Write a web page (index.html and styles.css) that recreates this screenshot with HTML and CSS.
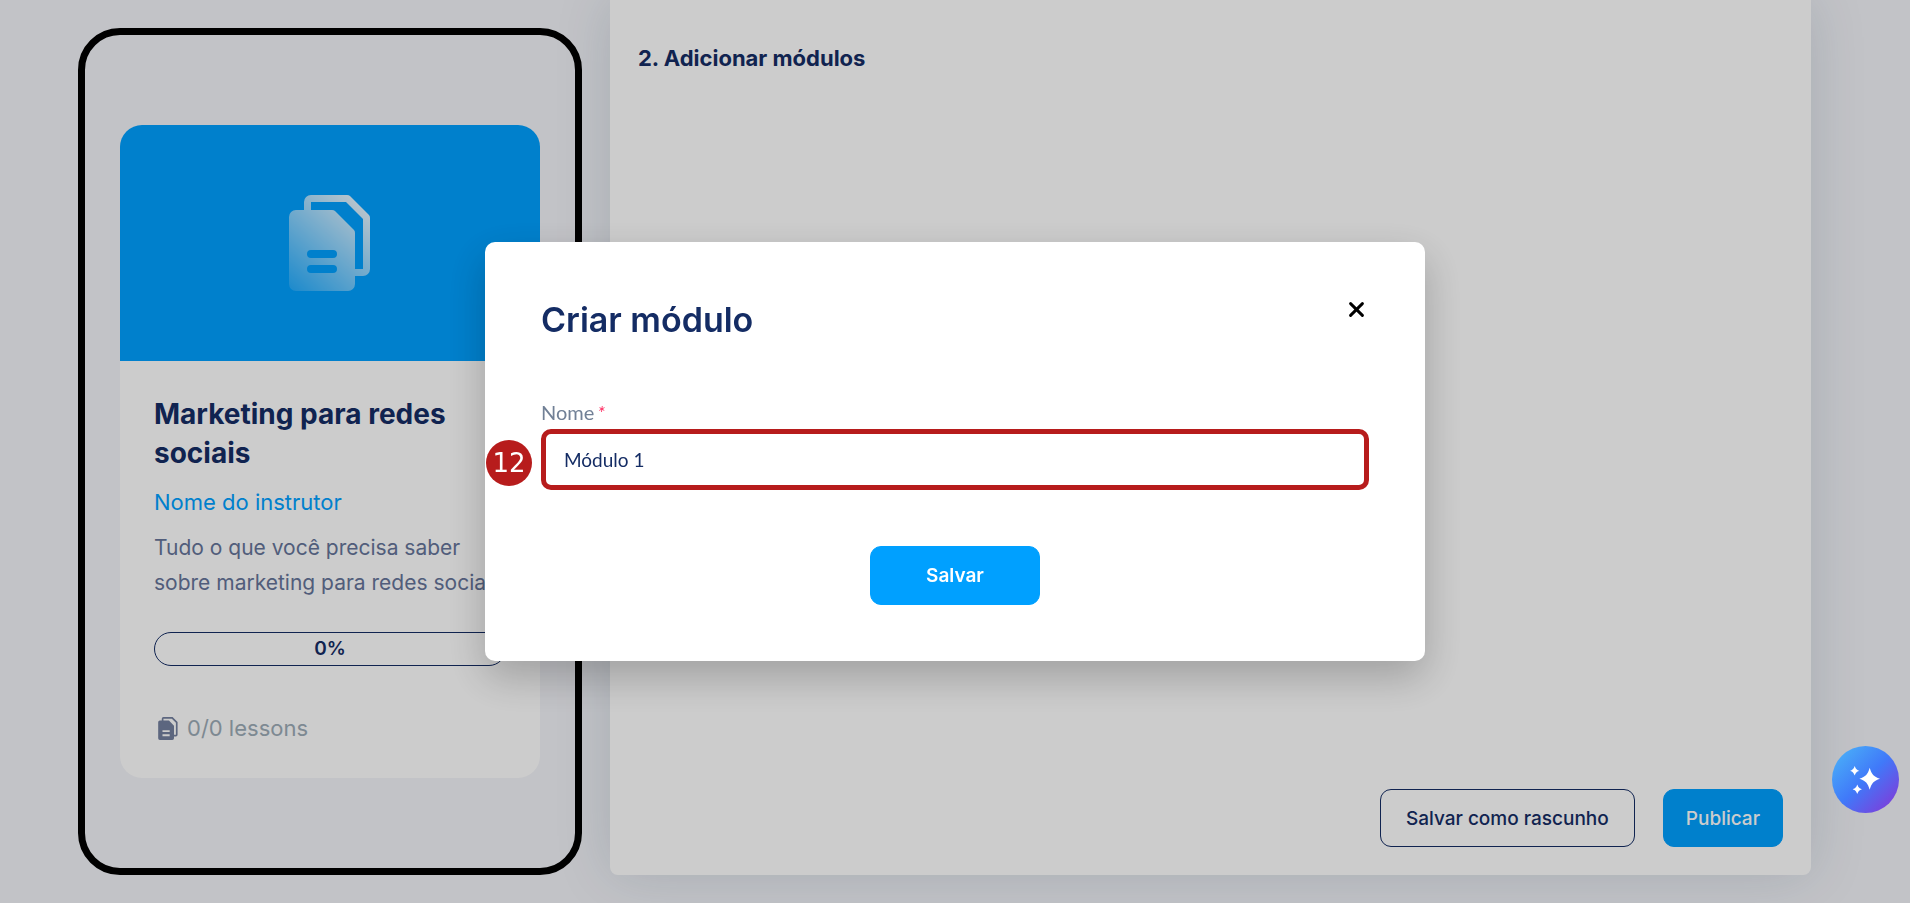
FILE: index.html
```html
<!DOCTYPE html>
<html lang="pt-BR">
<head>
  <meta charset="UTF-8" />
  <meta name="viewport" content="width=device-width, initial-scale=1.0"/>
  <title>Criar curso</title>
  <link rel="stylesheet" href="styles.css">
</head>
<body>
  <main class="page">
    <section class="phone">
      <article class="card">
        <div class="card-cover">
          <svg width="82" height="96" viewBox="0 0 82 96" aria-hidden="true">
            <defs>
              <linearGradient id="docs" gradientUnits="userSpaceOnUse" x1="4" y1="94" x2="78" y2="10">
                <stop offset="0" stop-color="#fff" stop-opacity=".16"/>
                <stop offset="1" stop-color="#fff" stop-opacity=".92"/>
              </linearGradient>
            </defs>
            <path fill="url(#docs)" fill-rule="evenodd" d="M7 15H15V7A7 7 0 0 1 22 0H58Q60 0 61 1L80 20Q81 21 81 23V74A7 7 0 0 1 74 81H66V89A7 7 0 0 1 59 96H7A7 7 0 0 1 0 89V22A7 7 0 0 1 7 15ZM22 15H43Q45 15 46 16L65 35Q66 36 66 38V74H74V24L57 7H22ZM22 55A4 4 0 0 0 22 63H44A4 4 0 0 0 44 55ZM22 70A4 4 0 0 0 22 78H44A4 4 0 0 0 44 70Z"/>
          </svg>
        </div>
        <div class="card-body">
          <h2>Marketing para redes sociais</h2>
          <p class="instructor">Nome do instrutor</p>
          <p class="description">Tudo o que você precisa saber sobre marketing para redes sociais</p>
          <div class="progress">0%</div>
          <p class="lessons">
            <svg width="20" height="23" viewBox="0 0 82 96" aria-hidden="true">
              <path fill="currentColor" fill-rule="evenodd" d="M7 15H15V7A7 7 0 0 1 22 0H60L81 21V74A7 7 0 0 1 74 81H66V89A7 7 0 0 1 59 96H7A7 7 0 0 1 0 89V22A7 7 0 0 1 7 15ZM22 15H45L66 36V74H74V24L57 7H22ZM18 55V63H48V55ZM18 72V80H48V72Z"/>
            </svg>
            0/0 lessons
          </p>
        </div>
      </article>
    </section>

    <section class="panel">
      <h3>2. Adicionar módulos</h3>
      <div class="panel-actions">
        <button type="button" class="btn btn-outline">Salvar como rascunho</button>
        <button type="button" class="btn">Publicar</button>
      </div>
    </section>
  </main>

  <div class="overlay">
    <form class="modal" role="dialog" aria-labelledby="modal-title">
      <div class="modal-header">
        <h1 id="modal-title">Criar módulo</h1>
        <button type="button" class="close" aria-label="Fechar">
          <svg width="15" height="15" viewBox="0 0 14 14" aria-hidden="true">
            <path d="M1.5 1.5L12.5 12.5M12.5 1.5L1.5 12.5" stroke="#000" stroke-width="2.7" stroke-linecap="round"/>
          </svg>
        </button>
      </div>
      <label for="nome">Nome<span class="required">*</span></label>
      <div class="field">
        <span class="step">12</span>
        <input type="text" id="nome" value="Módulo 1">
      </div>
      <button type="button" class="btn btn-save">Salvar</button>
    </form>
  </div>

  <button type="button" class="assistant" aria-label="Assistente">
    <svg width="67" height="67" viewBox="0 0 67 67" fill="#fff" aria-hidden="true">
      <path d="M37.7 21.7C39.6 28.4 41.6 30.6 48 32.7C41.6 34.8 39.6 37 37.7 43.7C35.8 37 33.8 34.8 27.4 32.7C33.8 30.6 35.8 28.4 37.7 21.7Z"/>
      <path d="M22.7 19.9C23.9 23 24.4 23.5 27.3 24.7C24.4 25.9 23.9 26.4 22.7 29.5C21.5 26.4 21 25.9 18.1 24.7C21 23.5 21.5 23 22.7 19.9Z"/>
      <path d="M25.3 38.5C26.5 41.6 27 42.1 29.9 43.3C27 44.5 26.5 45 25.3 48.1C24.1 45 23.6 44.5 20.7 43.3C23.6 42.1 24.1 41.6 25.3 38.5Z"/>
    </svg>
  </button>
</body>
</html>
```

FILE: styles.css
```css
:root {
  --azul: #00a0ff;
  --marinho: #142c64;
  --vermelho: #b71c1c;
  --fundo: #f3f4f9;
}

* {
  margin: 0;
  padding: 0;
  box-sizing: border-box;
}

body {
  background-color: var(--fundo);
  color: var(--marinho);
  font-family: Inter, sans-serif;
}

.page {
  display: flex;
  gap: 28px;
  min-height: 100vh;
  padding: 0 99px 28px 78px;
}

.phone {
  flex: 0 0 504px;
  margin-top: 28px;
  padding: 90px 35px;
  border: 7px solid #000;
  border-radius: 42px;
}

.card {
  background-color: #fff;
  border-radius: 22px;
  overflow: hidden;
}

.card-cover {
  display: flex;
  align-items: center;
  justify-content: center;
  height: 236px;
  background-color: var(--azul);
}

.card-body {
  padding: 34px;
}

.card h2 {
  margin-bottom: 13px;
  font-size: 28px;
  line-height: 39px;
}

.instructor {
  margin-bottom: 12px;
  color: var(--azul);
  font-size: 22px;
  line-height: 32px;
}

.description {
  margin-bottom: 32px;
  color: #66759a;
  font-size: 21px;
  line-height: 35px;
}

.progress {
  height: 34px;
  margin-bottom: 46px;
  border: 1px solid var(--marinho);
  border-radius: 17px;
  font-size: 19px;
  font-weight: 600;
  line-height: 32px;
  text-align: center;
}

.lessons {
  display: flex;
  align-items: center;
  gap: 9px;
  padding-left: 4px;
  color: #9dacb7;
  font-size: 22px;
  line-height: 32px;
}

.lessons svg {
  color: #74809f;
}

.panel {
  flex: 1;
  display: flex;
  flex-direction: column;
  justify-content: space-between;
  padding: 42px 28px 28px;
  background-color: #fff;
  border-radius: 0 0 8px 8px;
  box-shadow: 0 0 56px rgba(20, 60, 80, 0.15);
}

.panel h3 {
  font-size: 22px;
  line-height: 32px;
}

.panel-actions {
  display: flex;
  justify-content: flex-end;
  gap: 28px;
}

.btn {
  height: 58px;
  padding: 0 22px;
  background-color: var(--azul);
  border: 1px solid var(--azul);
  border-radius: 11px;
  color: #fff;
  font-family: inherit;
  font-size: 19px;
  font-weight: 500;
  cursor: pointer;
}

.btn-outline {
  padding: 0 25px;
  background-color: transparent;
  border-color: var(--marinho);
  color: var(--marinho);
}

.overlay {
  position: fixed;
  inset: 0;
  display: flex;
  align-items: center;
  justify-content: center;
  background-color: rgba(0, 0, 0, 0.2);
}

.modal {
  display: flex;
  flex-direction: column;
  width: 940px;
  max-width: 100%;
  padding: 56px;
  background-color: #fff;
  border-radius: 10px;
  box-shadow: 0 16px 40px rgba(0, 0, 0, 0.22);
}

.modal-header {
  display: flex;
  align-items: flex-start;
  justify-content: space-between;
  margin-bottom: 58px;
}

.modal h1 {
  font-size: 34px;
  font-weight: 600;
  line-height: 44px;
}

.close {
  display: flex;
  padding: 4px 5px;
  background: none;
  border: 0;
  cursor: pointer;
}

.modal label {
  margin-bottom: 5px;
  color: #718096;
  font-family: Lato, sans-serif;
  font-size: 20px;
  line-height: 24px;
}

.required {
  margin-left: 3px;
  color: #ff3366;
  font-style: italic;
}

.field {
  position: relative;
  margin-bottom: 56px;
}

.field input {
  width: 100%;
  height: 61px;
  padding: 0 18px;
  border: 5px solid var(--vermelho);
  border-radius: 10px;
  color: var(--marinho);
  font-family: Lato, sans-serif;
  font-size: 19px;
  outline: none;
}

/* marcador do passo, ao lado do campo */
.step {
  position: absolute;
  top: 11px;
  left: -55px;
  width: 46px;
  height: 46px;
  background-color: var(--vermelho);
  border-radius: 50%;
  color: #fff;
  font-family: "DejaVu Sans", sans-serif;
  font-size: 26px;
  line-height: 46px;
  text-align: center;
}

.btn-save {
  align-self: center;
  width: 170px;
  height: 59px;
  font-weight: 600;
}

.assistant {
  position: fixed;
  right: 11px;
  bottom: 90px;
  width: 67px;
  height: 67px;
  background: linear-gradient(135deg, #49acf8 10%, #4079f9 50%, #7c3fdb 90%);
  border: 0;
  border-radius: 50%;
  cursor: pointer;
}
```
